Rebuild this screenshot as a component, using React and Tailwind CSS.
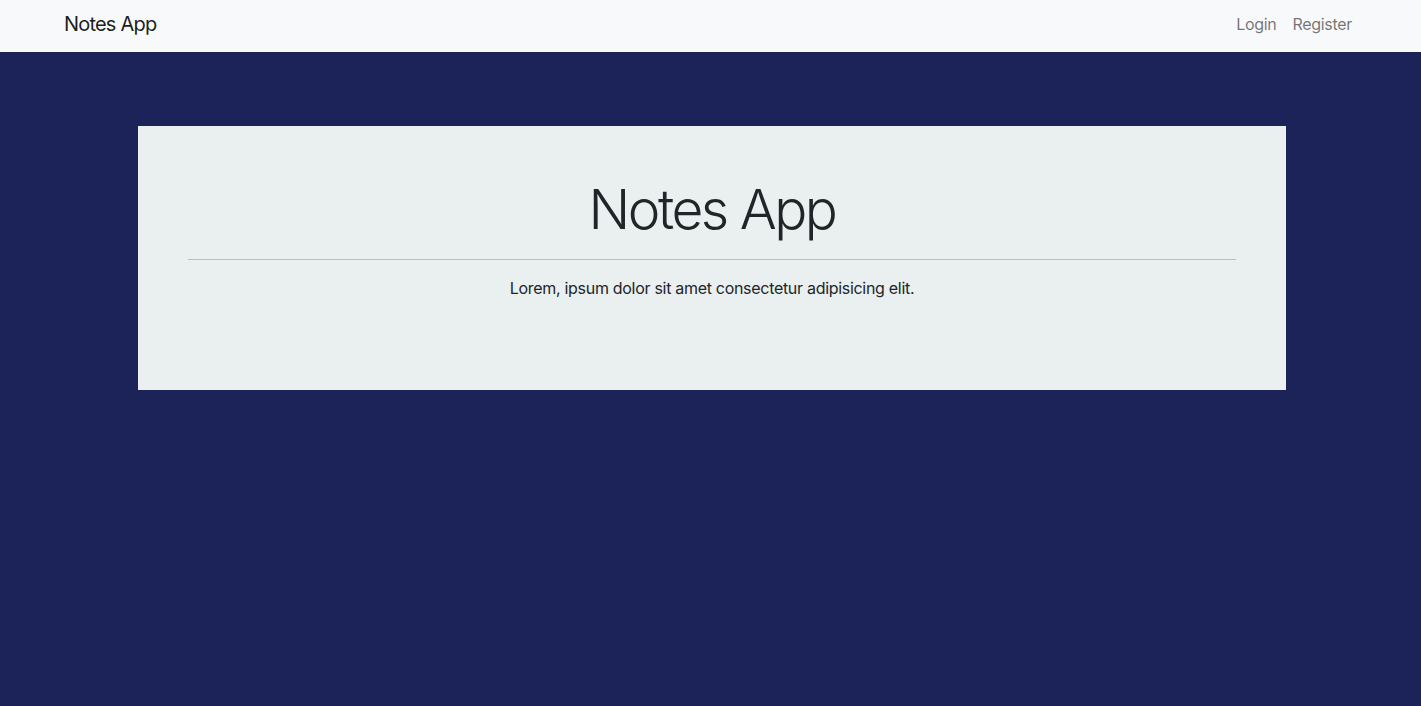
import React from 'react';

const App = () => {
  return (
    <div className="min-h-screen bg-[#1c2359] font-['Inter','Liberation_Sans',sans-serif] text-[#212529]">
      {/* navbar */}
      <nav className="h-[52px] bg-[#f8f9fa] flex items-center pb-[4px]">
        <div className="w-full px-[64px] flex items-center justify-between">
          <a href="#" className="text-[20px] text-black/90 leading-none tracking-[-0.8px]">Notes App</a>
          <div className="flex items-center gap-[16px] pr-[69px] -mr-[64px] text-[16px] text-black/55 tracking-[-0.3px]">
            <a href="#">Login</a>
            <a href="#">Register</a>
          </div>
        </div>
      </nav>

      {/* jumbotron */}
      <section className="w-[1148px] ml-[138px] mt-[74px] h-[264px] bg-[#eaf0f0] px-[50px] pt-[50px]">
        <h1 className="text-center text-[55px] font-light leading-[66px] tracking-[-2.5px]">Notes App</h1>
        <hr className="mt-[17px] border-t border-[#b9bdbf]" />
        <p className="text-center text-[16px] leading-[24px] mt-[16px] tracking-[-0.3px]">Lorem, ipsum dolor sit amet consectetur adipisicing elit.</p>
      </section>
    </div>
  );
};

export default App;
